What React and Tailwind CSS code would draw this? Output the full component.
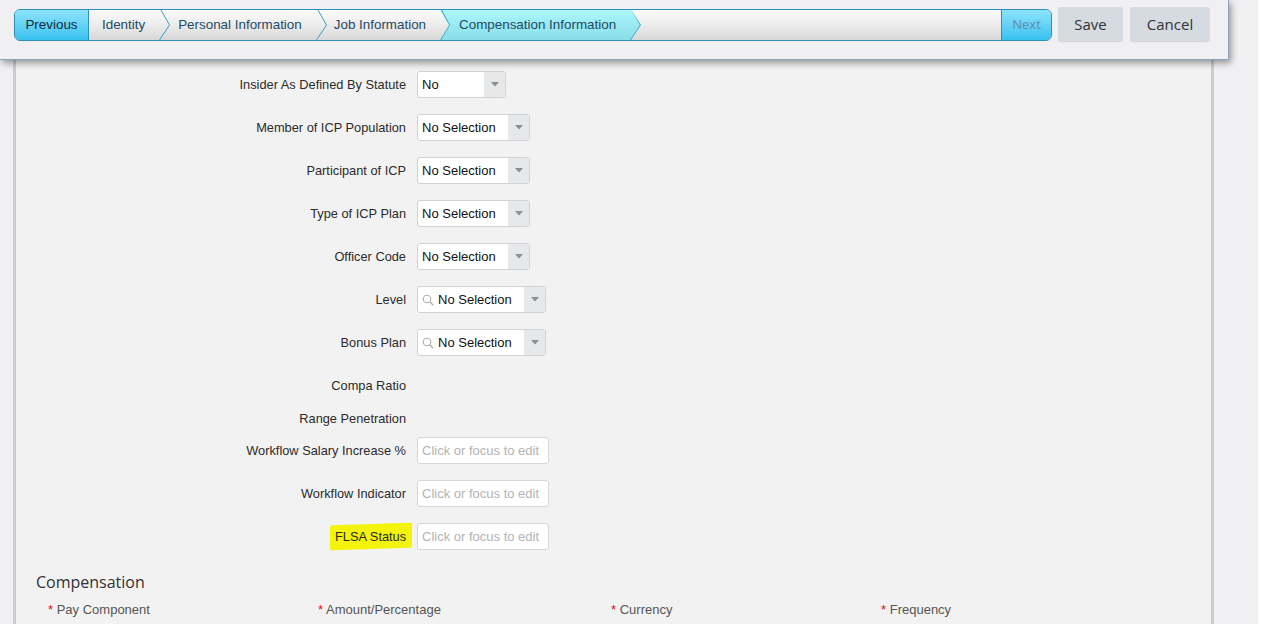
import React from 'react';

const sans = { fontFamily: '"Liberation Sans", Arial, sans-serif' };
const ui = { fontFamily: '"Open Sans", "Noto Sans", sans-serif' };

const Chevron = () => (
  <svg width="11" height="30" viewBox="0 0 11 30" className="shrink-0">
    <polyline points="2,0 10.5,15 0.5,30" fill="none" stroke="#3a9cc2" strokeWidth="1" />
  </svg>
);

const Caret = () => (
  <svg width="8" height="5" viewBox="0 0 8 5">
    <polygon points="0,0 8,0 4,4.5" fill="#8c8f92" />
  </svg>
);

const Magnifier = () => (
  <svg width="12" height="12" viewBox="0 0 12 12" className="shrink-0">
    <circle cx="5" cy="5" r="3.8" fill="none" stroke="#a9adb1" strokeWidth="1.1" />
    <line x1="7.8" y1="7.8" x2="11.2" y2="11.2" stroke="#a9adb1" strokeWidth="1.3" />
  </svg>
);

const Select = ({ value, width, search }) => (
  <div
    className="flex h-[27px] rounded-[3px] border border-[#cfd3d7] bg-white overflow-hidden"
    style={{ width }}
  >
    <div className="flex flex-1 items-center gap-[4px] pl-[4px] pt-[1px] text-[13px] text-[#111]">
      {search && <Magnifier />}
      <span>{value}</span>
    </div>
    <div className="flex w-[21px] items-center justify-center bg-[#e6e8ea]">
      <Caret />
    </div>
  </div>
);

const TextInput = () => (
  <div className="flex h-[27px] w-[132px] items-center rounded-[3px] border border-[#d3d7db] bg-white pl-[4px] text-[13px] text-[#b3b3b3]">
    Click or focus to edit
  </div>
);

const rows = [
  { label: 'Insider As Defined By Statute', field: <Select value="No" width={89} /> },
  { label: 'Member of ICP Population', field: <Select value="No Selection" width={113} /> },
  { label: 'Participant of ICP', field: <Select value="No Selection" width={113} /> },
  { label: 'Type of ICP Plan', field: <Select value="No Selection" width={113} /> },
  { label: 'Officer Code', field: <Select value="No Selection" width={113} /> },
  { label: 'Level', field: <Select value="No Selection" width={129} search /> },
  { label: 'Bonus Plan', field: <Select value="No Selection" width={129} search /> },
  { label: 'Compa Ratio', field: null },
  { label: 'Range Penetration', field: null, mt: 'mt-[6px]' },
  { label: 'Workflow Salary Increase %', field: <TextInput />, mt: 'mt-[5px]' },
  { label: 'Workflow Indicator', field: <TextInput /> },
  { label: 'FLSA Status', field: <TextInput />, highlight: true },
];

const payCols = [
  { label: 'Pay Component', w: 'w-[270px]' },
  { label: 'Amount/Percentage', w: 'w-[293px]' },
  { label: 'Currency', w: 'w-[270px]' },
  { label: 'Frequency', w: 'w-[200px]' },
];

export default function App() {
  return (
    <div className="h-[637px] w-full bg-white" style={sans}>
      <div className="relative h-[624px] w-[1258px] overflow-hidden bg-[#f0f0f2]">
        {/* Header with wizard steps */}
        <div className="relative z-10 flex h-[60px] w-[1229px] items-start border-b border-r border-[#8ba3b4] bg-[#f0f0f2] pl-[14px] pt-[7px] shadow-[2px_3px_7px_rgba(0,0,0,0.4)]">
          <div className="mt-[2px] flex h-[32px] w-[1038px] overflow-hidden rounded-[6px] border border-[#2f8fb6] bg-gradient-to-b from-[#fbfbfb] via-[#ececec] to-[#d7d7d7] text-[13.4px] text-[#1d4a66]">
            <div className="flex w-[74px] shrink-0 items-center justify-center border-r border-[#2f8fb6] bg-gradient-to-b from-[#8ae4fb] to-[#34c1ee] pt-[1px] text-[#0b2a40]">
              Previous
            </div>
            <div className="flex items-center pl-[13px] pr-[14px] pt-[1px]">Identity</div>
            <Chevron />
            <div className="flex items-center pl-[8px] pr-[14px] pt-[1px]">Personal Information</div>
            <Chevron />
            <div className="flex items-center pl-[7px] pr-[14px] pt-[1px]">Job Information</div>
            <div
              className="relative flex w-[201px] shrink-0 items-center bg-gradient-to-b from-[#acf7fd] to-[#88dde7] pl-[19px] pt-[1px]"
              style={{ clipPath: 'polygon(0 0, 191px 0, 201px 15px, 191px 30px, 0 30px, 9px 15px)' }}
            >
              Compensation Information
              <svg width="201" height="30" viewBox="0 0 201 30" className="absolute left-0 top-0">
                <polyline points="1.5,0 9.5,15 0.5,30" fill="none" stroke="#3a9cc2" />
                <polyline points="191.5,0 200.5,15 190.5,30" fill="none" stroke="#3a9cc2" />
              </svg>
            </div>
            <div className="flex-1" />
            <div
              className="flex w-[50px] shrink-0 items-center justify-center border-l border-[#2f8fb6] bg-gradient-to-b from-[#8ae4fb] to-[#34c1ee] text-[13px] text-[#5b8ea6]"
              style={ui}
            >
              Next
            </div>
          </div>
          <button
            className="ml-[6px] flex h-[34px] w-[65px] items-center justify-center rounded-[3px] bg-[#d5dbe1] text-[15px] text-[#333] shadow-[0_1px_1px_rgba(0,0,0,0.12)]"
            style={ui}
          >
            Save
          </button>
          <button
            className="ml-[7px] flex h-[34px] w-[80px] items-center justify-center rounded-[3px] bg-[#d5dbe1] text-[15px] text-[#333] shadow-[0_1px_1px_rgba(0,0,0,0.12)]"
            style={ui}
          >
            Cancel
          </button>
        </div>

        {/* Form panel */}
        <div className="ml-[13px] h-[564px] w-[1201px] border-l-[3px] border-r-[3px] border-[#c9cdd1] bg-[#f2f2f2]">
          <div className="flex flex-col pt-[11px]">
            {rows.map((r, i) => (
              <div
                key={r.label}
                className={`flex h-[27px] items-center ${i === 0 ? '' : r.mt || 'mt-[16px]'}`}
              >
                <div className="flex w-[390px] shrink-0 justify-end pt-[1px] text-[12.8px] text-[#2b2b2b]">
                  {r.highlight ? (
                    <span className="-mr-[6px] -skew-y-2 rounded-[2px] bg-[#f3f30c] py-[3px] pl-[5px] pr-[6px]">
                      <span className="inline-block skew-y-2">{r.label}</span>
                    </span>
                  ) : (
                    r.label
                  )}
                </div>
                <div className="ml-[11px]">{r.field}</div>
              </div>
            ))}
          </div>

          <div className="mt-[20px] pl-[20px] text-[16px] text-[#333]" style={ui}>
            Compensation
          </div>
          <div className="mt-[6px] flex pl-[32px] text-[13px] text-[#555]">
            {payCols.map((c) => (
              <div key={c.label} className={`${c.w} shrink-0`}>
                <span className="text-[#d11]">*</span> {c.label}
              </div>
            ))}
          </div>
        </div>
      </div>
    </div>
  );
}
